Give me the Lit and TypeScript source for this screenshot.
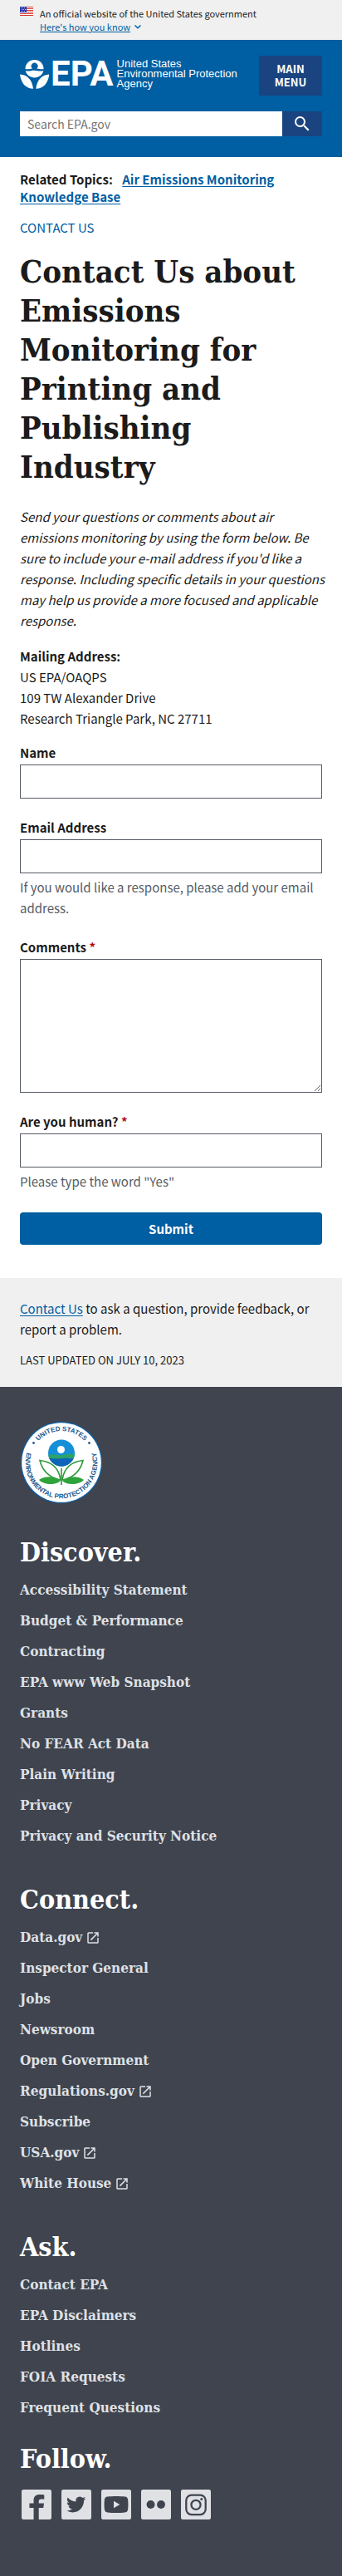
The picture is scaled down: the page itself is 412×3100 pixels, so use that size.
import { LitElement, html, svg, css } from "lit";
import { customElement } from "lit/decorators.js";

interface FooterLink {
  label: string;
  external?: boolean;
}

const DISCOVER: FooterLink[] = [
  { label: "Accessibility Statement" },
  { label: "Budget & Performance" },
  { label: "Contracting" },
  { label: "EPA www Web Snapshot" },
  { label: "Grants" },
  { label: "No FEAR Act Data" },
  { label: "Plain Writing" },
  { label: "Privacy" },
  { label: "Privacy and Security Notice" },
];

const CONNECT: FooterLink[] = [
  { label: "Data.gov", external: true },
  { label: "Inspector General" },
  { label: "Jobs" },
  { label: "Newsroom" },
  { label: "Open Government" },
  { label: "Regulations.gov", external: true },
  { label: "Subscribe" },
  { label: "USA.gov", external: true },
  { label: "White House", external: true },
];

const ASK: FooterLink[] = [
  { label: "Contact EPA" },
  { label: "EPA Disclaimers" },
  { label: "Hotlines" },
  { label: "FOIA Requests" },
  { label: "Frequent Questions" },
];

const SOCIAL = [
  {
    name: "Facebook",
    art: svg`<path class="ink" d="M9.7 24V14.7H6.3V11h3.4V8.6C9.7 5.5 11.5 4 14.3 4c1.6 0 3 .1 3.9.3v3.3h-2.4c-1.6 0-2 .7-2 1.8V11h4.2l-.5 3.7h-3.7V24z"/>`,
  },
  {
    name: "Twitter",
    art: svg`<path class="ink" transform="translate(4 4.2) scale(.65)" d="M23.953 4.57a10 10 0 01-2.825.775 4.958 4.958 0 002.163-2.723c-.951.555-2.005.959-3.127 1.184a4.92 4.92 0 00-8.384 4.482C7.69 8.095 4.067 6.13 1.64 3.162a4.822 4.822 0 00-.666 2.475c0 1.71.87 3.213 2.188 4.096a4.904 4.904 0 01-2.228-.616v.06a4.923 4.923 0 003.946 4.827 4.996 4.996 0 01-2.212.085 4.936 4.936 0 004.604 3.417 9.867 9.867 0 01-6.102 2.105c-.39 0-.779-.023-1.17-.067a13.995 13.995 0 007.557 2.209c9.053 0 13.998-7.496 13.998-13.985 0-.21 0-.42-.015-.63A9.935 9.935 0 0024 4.59z"/>`,
  },
  {
    name: "YouTube",
    art: svg`<path class="ink" d="M5 5.7c4-.5 10-.5 14 0 1.5.2 2.2.9 2.4 2.4.3 2.5.3 5.3 0 7.800-.2 1.5-.9 2.2-2.4 2.4-4 .5-10 .5-14 0-1.500-.2-2.200-.9-2.400-2.400-.3-2.500-.3-5.300 0-7.800C2.800 6.600 3.500 5.900 5 5.700z"/><path class="plate" d="M10 9.200v5.600l4.900-2.800z"/>`,
  },
  {
    name: "Flickr",
    art: svg`<circle class="ink" cx="7.700" cy="12" r="3.300"/><circle class="ink" cx="16" cy="12" r="3.300"/>`,
  },
  {
    name: "Instagram",
    art: svg`<rect class="line" x="4.200" y="4.400" width="15.600" height="15.600" rx="4.300"/><circle class="line" cx="12" cy="12.200" r="3.700"/><circle class="ink" cx="16.500" cy="7.600" r="1"/>`,
  },
];

@customElement("app-root")
export class AppRoot extends LitElement {
  static styles = css`
    :host {
      display: block;
      --sans: "Noto Sans CJK SC", "Noto Sans", sans-serif;
      --serif: "DejaVu Serif Condensed", "DejaVu Serif", serif;
      --blue: #005ea2;
      --navy: #1a4480;
      --slate: #3f444f;
      --light: #dfe1e5;
      font-family: var(--sans);
      font-size: 15px;
      line-height: 25px;
      color: #1b1b1b;
      background: #fff;
    }
    * {
      box-sizing: border-box;
    }
    svg {
      display: block;
      flex: none;
    }
    a {
      color: var(--blue);
      text-underline-offset: 2px;
    }
    p,
    h1,
    h2,
    ul,
    address {
      margin: 0;
      padding: 0;
      font-style: normal;
      list-style: none;
    }
    input,
    textarea,
    button {
      font: inherit;
      border-radius: 0;
      margin: 0;
    }

    .banner {
      display: flex;
      gap: 8px;
      padding: 8px 24px;
      background: #f0f0f0;
      font-size: 11px;
      line-height: 16px;
    }
    .banner-link {
      display: flex;
      align-items: center;
      gap: 4px;
      padding: 0;
      border: 0;
      background: none;
      color: var(--blue);
      line-height: 16px;
    }
    .banner-link span {
      text-decoration: underline;
    }

    .header {
      background: var(--blue);
      padding: 19px 24px 25px;
      color: #fff;
    }
    .brand-row {
      display: flex;
      justify-content: space-between;
      align-items: flex-start;
    }
    .brand {
      display: flex;
      align-items: flex-start;
      padding-top: 4px;
      color: #fff;
      text-decoration: none;
    }
    .brand svg {
      margin-top: 1px;
    }
    .brand-mark {
      font: bold 42px/36px "Liberation Sans Narrow", Roboto, sans-serif;
      margin-left: 1px;
    }
    .brand-name {
      font: 13px/12px "Liberation Sans", sans-serif;
      margin-left: 4px;
      white-space: nowrap;
    }
    .brand-name span {
      display: block;
    }
    .menu {
      width: 76px;
      height: 48px;
      padding: 0 16px;
      border: 0;
      background: var(--navy);
      color: #fff;
      font-size: 13px;
      font-weight: 700;
      line-height: 16px;
    }
    .search {
      display: flex;
      margin-top: 19px;
    }
    .search-box {
      flex: 1;
      min-width: 0;
      height: 30px;
      border: 0;
      padding: 0 9px;
      background: #fff;
      font-size: 14px;
    }
    .search-box::placeholder {
      color: #757575;
      opacity: 1;
    }
    .search-go {
      display: grid;
      place-items: center;
      width: 48px;
      padding: 0;
      border: 0;
      background: var(--navy);
    }

    .main {
      padding: 16px 24px 40px;
    }
    .related {
      font-weight: 700;
      line-height: 21px;
    }
    .related a {
      margin-left: 8px;
    }
    .kicker {
      margin-top: 14px;
    }
    .kicker a {
      text-decoration: none;
    }
    h1 {
      font: bold 38px/47px var(--serif);
      margin-top: 17px;
    }
    .intro {
      margin: 24px -8px 0 0;
      font-style: italic;
    }
    .mail {
      margin-top: 18px;
    }
    .form {
      display: flex;
      flex-direction: column;
    }
    .field {
      display: flex;
      flex-direction: column;
      margin-top: 25px;
    }
    .field:first-child {
      margin-top: 19px;
    }
    .field label {
      font-weight: 700;
      line-height: 20px;
    }
    .field input,
    .field textarea {
      display: block;
      width: 100%;
      height: 41px;
      margin-top: 4px;
      padding: 8px;
      border: 1px solid #565c65;
      background: #fff;
    }
    .field textarea {
      height: 161px;
    }
    .required {
      color: #b50909;
    }
    .hint {
      margin-top: 4px;
      color: #565c65;
    }
    .submit {
      height: 39px;
      margin-top: 25px;
      border: 0;
      border-radius: 4px;
      background: var(--blue);
      color: #fff;
      font-weight: 700;
    }

    .feedback {
      padding: 24px 24px 20px;
      background: #f0f0f0;
    }
    .updated {
      margin-top: 12px;
      font-size: 13px;
    }

    .footer {
      padding: 41px 24px 68px;
      background: var(--slate);
      color: var(--light);
    }
    h2 {
      font: bold 32px/40px var(--serif);
      color: #fff;
      margin: 38px 0 7px;
    }
    .links a {
      display: flex;
      align-items: center;
      gap: 4px;
      color: var(--light);
      text-decoration: none;
      font: bold 17px/37px var(--serif);
    }
    .follow {
      margin: 23px 0 17px;
    }
    .social {
      display: flex;
      gap: 12px;
      padding: 0 2px;
    }
    .plate {
      fill: var(--light);
    }
    .ink {
      fill: var(--slate);
    }
    .line {
      fill: none;
      stroke: var(--slate);
      stroke-width: 1.5;
    }
    .seal-text {
      font: bold 8px "Liberation Sans", sans-serif;
      fill: #23588f;
    }
  `;

  private flag() {
    return html`<svg width="16" height="11" viewBox="0 0 16 11" aria-hidden="true">
      <rect width="16" height="11" fill="#fff" />
      ${[0, 2, 4, 6, 8, 10].map((y) => svg`<rect y=${y} width="16" height="1" fill="#d8372c"/>`)}
      <rect width="8" height="7" fill="#2b3ab0" />
      ${[1, 3, 5].map((y) =>
        [1, 3, 5].map((x) => svg`<rect x=${x + (y === 3 ? 1 : 0)} y=${y} width="1" height="1" fill="#b8bfe8"/>`)
      )}
    </svg>`;
  }

  private flower() {
    return html`<svg width="36" height="35" viewBox="0 0 36 35" fill="#fff" aria-hidden="true">
      <path d="M6.500 11C6.500 4.500 11.500 0 17.600 0s11 4.500 11 11c-3.500.8-5.500-.4-8.300-.6a3.900 3.900 0 1 0-5.400 0C12 11 9.800 11.700 6.500 11z" />
      <path d="M6.700 13.200c4 1 7-.5 10.500-.4 4 .1 7 1.500 11.200.4-1.200 4.800-5.700 8.200-10.800 8.200s-9.700-3.400-10.900-8.200z" />
      <path d="M0 17.500c8.500.3 14.800 6.300 16 17.300C7 34.500 1.500 28.500 0 17.500z" />
      <path d="M35.300 17.500C26.800 17.800 20.500 23.800 19.300 34.800c9-.3 14.500-6.300 16-17.300z" />
    </svg>`;
  }

  private seal() {
    return html`<svg width="100" height="100" viewBox="0 0 100 100" role="img" aria-label="EPA seal">
      <defs>
        <path id="arc-top" d="M12 50a38 38 0 0 1 76 0" />
        <path id="arc-low" d="M13.400 26.800A43.300 43.300 0 1 0 86.600 26.800" />
        <clipPath id="globe"><circle cx="50" cy="38.500" r="16" /></clipPath>
      </defs>
      <circle cx="50" cy="50" r="49" fill="#0d64ab" />
      <circle cx="50" cy="50" r="47.800" fill="#fff" />
      <text class="seal-text" text-anchor="middle"><textPath href="#arc-top" startOffset="50%">UNITED STATES</textPath></text>
      <text class="seal-text" text-anchor="middle"><textPath href="#arc-low" startOffset="50%">ENVIRONMENTAL PROTECTION AGENCY</textPath></text>
      <circle cx="16.500" cy="26.500" r="1.400" fill="#23588f" />
      <circle cx="83.500" cy="26.500" r="1.400" fill="#23588f" />
      <g clip-path="url(#globe)">
        <rect x="34" y="22" width="32" height="33" fill="#1590d8" />
        <path d="M34 41c6-2 12 1 17 0s10-2 15-1v16H34z" fill="#2ba36b" />
        <path d="M34 45c7 0 12 1 18 0s9 1 14 0v12H34z" fill="#0d64b8" />
      </g>
      <circle cx="49.500" cy="34.500" r="4.500" fill="#fff" />
      <g stroke="#2d9a3a" fill="none" stroke-width="1.600">
        <path d="M50 57v20" />
        <path d="M49 71C36 69 27 60 24 47.500 38 49 47 57 49 71z" />
        <path d="M51 71c13-2 22-11 25-23.500C62 49 53 57 51 71z" />
      </g>
      <path d="M49 72c-7-6-20-6-26-1 6 6 20 7 26 1zM51 72c7-6 20-6 26-1-6 6-20 7-26 1z" fill="#2da33a" />
    </svg>`;
  }

  private links(items: FooterLink[]) {
    return html`<ul class="links">
      ${items.map(
        (item) => html`<li>
          <a href="#"
            >${item.label}${item.external
              ? html`<svg width="18" height="18" viewBox="0 0 24 24" fill="#dfe1e5" aria-hidden="true">
                  <path d="M19 19H5V5h7V3H5a2 2 0 0 0-2 2v14a2 2 0 0 0 2 2h14a2 2 0 0 0 2-2v-7h-2v7zM14 3v2h3.590l-9.830 9.830 1.410 1.410L19 6.410V10h2V3h-7z" />
                </svg>`
              : ""}</a
          >
        </li>`
      )}
    </ul>`;
  }

  render() {
    return html`
      <section class="banner" aria-label="Official government website">
        ${this.flag()}
        <div>
          <p>An official website of the United States government</p>
          <button class="banner-link" type="button">
            <span>Here's how you know</span>
            <svg width="10" height="10" viewBox="0 0 10 10" fill="none" stroke="#005ea2" stroke-width="1.500">
              <path d="M1.500 3.500 5 6.700l3.500-3.200" />
            </svg>
          </button>
        </div>
      </section>

      <header class="header">
        <div class="brand-row">
          <a class="brand" href="#">
            ${this.flower()}
            <span class="brand-mark">EPA</span>
            <span class="brand-name"><span>United States</span><span>Environmental Protection</span><span>Agency</span></span>
          </a>
          <button class="menu" type="button">MAIN MENU</button>
        </div>
        <form class="search" role="search">
          <input class="search-box" type="search" aria-label="Search" placeholder="Search EPA.gov" />
          <button class="search-go" type="button" aria-label="Search">
            <svg width="24" height="24" viewBox="0 0 24 24" fill="#fff">
              <path d="M15.500 14h-.790l-.280-.270A6.471 6.471 0 0 0 16 9.500 6.500 6.500 0 1 0 9.500 16c1.610 0 3.090-.590 4.230-1.570l.270.280v.790l5 4.990L20.490 19l-4.990-5zm-6 0C7.010 14 5 11.990 5 9.500S7.010 5 9.500 5 14 7.010 14 9.500 11.990 14 9.500 14z" />
            </svg>
          </button>
        </form>
      </header>

      <main class="main">
        <p class="related">Related Topics: <a href="#">Air Emissions Monitoring Knowledge Base</a></p>
        <p class="kicker"><a href="#">CONTACT US</a></p>
        <h1>Contact Us about Emissions Monitoring for Printing and Publishing Industry</h1>
        <p class="intro">
          Send your questions or comments about air emissions monitoring by using the form below. Be sure to include
          your e-mail address if you'd like a response. Including specific details in your questions may help us
          provide a more focused and applicable response.
        </p>
        <address class="mail">
          <strong>Mailing Address:</strong><br />US EPA/OAQPS<br />109 TW Alexander Drive<br />Research Triangle Park,
          NC 27711
        </address>
        <form class="form">
          <div class="field">
            <label for="name">Name</label>
            <input id="name" type="text" />
          </div>
          <div class="field">
            <label for="email">Email Address</label>
            <input id="email" type="email" aria-describedby="email-hint" />
            <p class="hint" id="email-hint">If you would like a response, please add your email address.</p>
          </div>
          <div class="field">
            <label for="comments">Comments <span class="required">*</span></label>
            <textarea id="comments" required></textarea>
          </div>
          <div class="field">
            <label for="human">Are you human? <span class="required">*</span></label>
            <input id="human" type="text" required aria-describedby="human-hint" />
            <p class="hint" id="human-hint">Please type the word "Yes"</p>
          </div>
          <button class="submit" type="button">Submit</button>
        </form>
      </main>

      <section class="feedback">
        <p><a href="#">Contact Us</a> to ask a question, provide feedback, or report a problem.</p>
        <p class="updated">LAST UPDATED ON JULY 10, 2023</p>
      </section>

      <footer class="footer">
        ${this.seal()}
        <h2>Discover.</h2>
        ${this.links(DISCOVER)}
        <h2>Connect.</h2>
        ${this.links(CONNECT)}
        <h2>Ask.</h2>
        ${this.links(ASK)}
        <h2 class="follow">Follow.</h2>
        <div class="social">
          ${SOCIAL.map(
            (item) => html`<a href="#" aria-label=${item.name}
              ><svg width="36" height="36" viewBox="0 0 24 24">
                <rect class="plate" width="24" height="24" rx="1.500" />${item.art}
              </svg></a
            >`
          )}
        </div>
      </footer>
    `;
  }
}
